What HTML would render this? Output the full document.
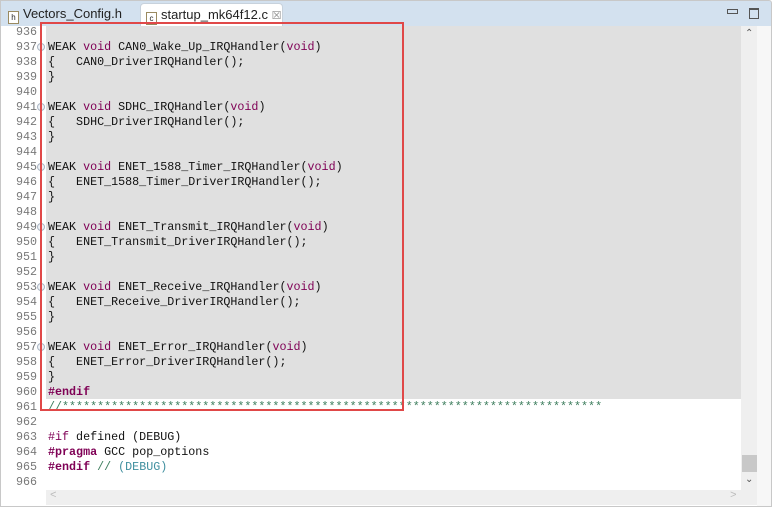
<!DOCTYPE html>
<html><head><style>
body{margin:0;width:774px;height:509px;background:#fff;position:relative;overflow:hidden;font-family:"Liberation Mono",monospace}
.tabbar{position:absolute;left:0;top:0;width:772px;height:26px;background:#d3e1ef;border:1px solid #c8c8c8;border-bottom:none;box-sizing:border-box;border-radius:0 3px 0 0}
.tab{position:absolute;top:3px;height:23px;font:13px "Liberation Sans",sans-serif;color:#222;line-height:22px}
.t2{left:140px;width:143px;background:#fff;border:1px solid #c8d2dc;border-bottom:none;border-radius:4px 4px 0 0;box-sizing:border-box}
.ic{display:inline-block;width:9px;height:11px;border:1px solid #9a8a60;background:#fff;font-size:8px;line-height:11px;text-align:center;vertical-align:-2px;margin-right:4px}
.frame{position:absolute;left:0;top:26px;width:772px;height:481px;border:1px solid #c8c8c8;border-top:none;box-sizing:border-box}
.hl{position:absolute;left:46px;top:26px;width:695px;height:373px;background:#e0e0e0}
.ln{position:absolute;left:0;width:37px;text-align:right;color:#787878;font-size:11.7px;line-height:15px}
.code{position:absolute;left:48px;font-size:11.7px;line-height:15px;white-space:pre;color:#111}
.k{color:#7f0055}.kb{color:#7f0055;font-weight:bold}.c{color:#3f7f5f}.d{color:#3f8f9f}
.fold{position:absolute;left:37px;width:6px;height:6px;border:1px solid #aab6c4;border-radius:50%;background:#eef2f6}
.red{position:absolute;left:40px;top:22px;width:364px;height:389px;border:2px solid #e04848;box-sizing:border-box}
.vs{position:absolute;left:741px;top:26px;width:16px;height:464px;background:#efefef}
.rs{position:absolute;left:757px;top:26px;width:14px;height:480px;background:#f7f7f7}
.hs{position:absolute;left:46px;top:490px;width:711px;height:15px;background:#efefef}
</style></head><body>
<div class="tabbar"></div>
<div class="tab" style="left:8px"><span class="ic">h</span>Vectors_Config.h</div>
<div class="tab t2"><span style="margin-left:5px" class="ic">c</span>startup_mk64f12.c <span style="color:#888;font-size:11px">&#x2612;</span></div>
<div style="position:absolute;left:727px;top:9px;width:9px;height:3px;border:1px solid #555"></div>
<div style="position:absolute;left:749px;top:8px;width:8px;height:8px;border:1px solid #555;border-top-width:2px"></div>
<div class="frame"></div>
<div class="vs"></div><div class="rs"></div><div class="hs"></div>
<div style="position:absolute;left:742px;top:455px;width:15px;height:17px;background:#c8c8c8"></div>
<div style="position:absolute;left:745px;top:28px;color:#555;font-size:10px;font-family:'DejaVu Sans'">&#x2303;</div>
<div style="position:absolute;left:745px;top:474px;color:#555;font-size:10px;font-family:'DejaVu Sans'">&#x2304;</div>
<div style="position:absolute;left:50px;top:490px;color:#bbb;font-size:11px">&lt;</div>
<div style="position:absolute;left:730px;top:490px;color:#bbb;font-size:11px">&gt;</div>
<div class="hl"></div>
<div class="ln" style="top:25px">936<br>937<br>938<br>939<br>940<br>941<br>942<br>943<br>944<br>945<br>946<br>947<br>948<br>949<br>950<br>951<br>952<br>953<br>954<br>955<br>956<br>957<br>958<br>959<br>960<br>961<br>962<br>963<br>964<br>965<br>966</div>
<div class="fold" style="top:43px"></div><div class="fold" style="top:103px"></div><div class="fold" style="top:163px"></div><div class="fold" style="top:223px"></div><div class="fold" style="top:283px"></div><div class="fold" style="top:343px"></div>
<div class="code" style="top:25px">
WEAK <span class="k">void</span> CAN0_Wake_Up_IRQHandler(<span class="k">void</span>)
{   CAN0_DriverIRQHandler();
}

WEAK <span class="k">void</span> SDHC_IRQHandler(<span class="k">void</span>)
{   SDHC_DriverIRQHandler();
}

WEAK <span class="k">void</span> ENET_1588_Timer_IRQHandler(<span class="k">void</span>)
{   ENET_1588_Timer_DriverIRQHandler();
}

WEAK <span class="k">void</span> ENET_Transmit_IRQHandler(<span class="k">void</span>)
{   ENET_Transmit_DriverIRQHandler();
}

WEAK <span class="k">void</span> ENET_Receive_IRQHandler(<span class="k">void</span>)
{   ENET_Receive_DriverIRQHandler();
}

WEAK <span class="k">void</span> ENET_Error_IRQHandler(<span class="k">void</span>)
{   ENET_Error_DriverIRQHandler();
}
<span class="kb">#endif</span>
<span class="c">//*****************************************************************************</span>

<span class="k">#if</span> defined (DEBUG)
<span class="kb">#pragma</span> GCC pop_options
<span class="kb">#endif</span> <span class="c">// </span><span class="d">(DEBUG)</span>
</div>
<div class="red"></div>
</body></html>
